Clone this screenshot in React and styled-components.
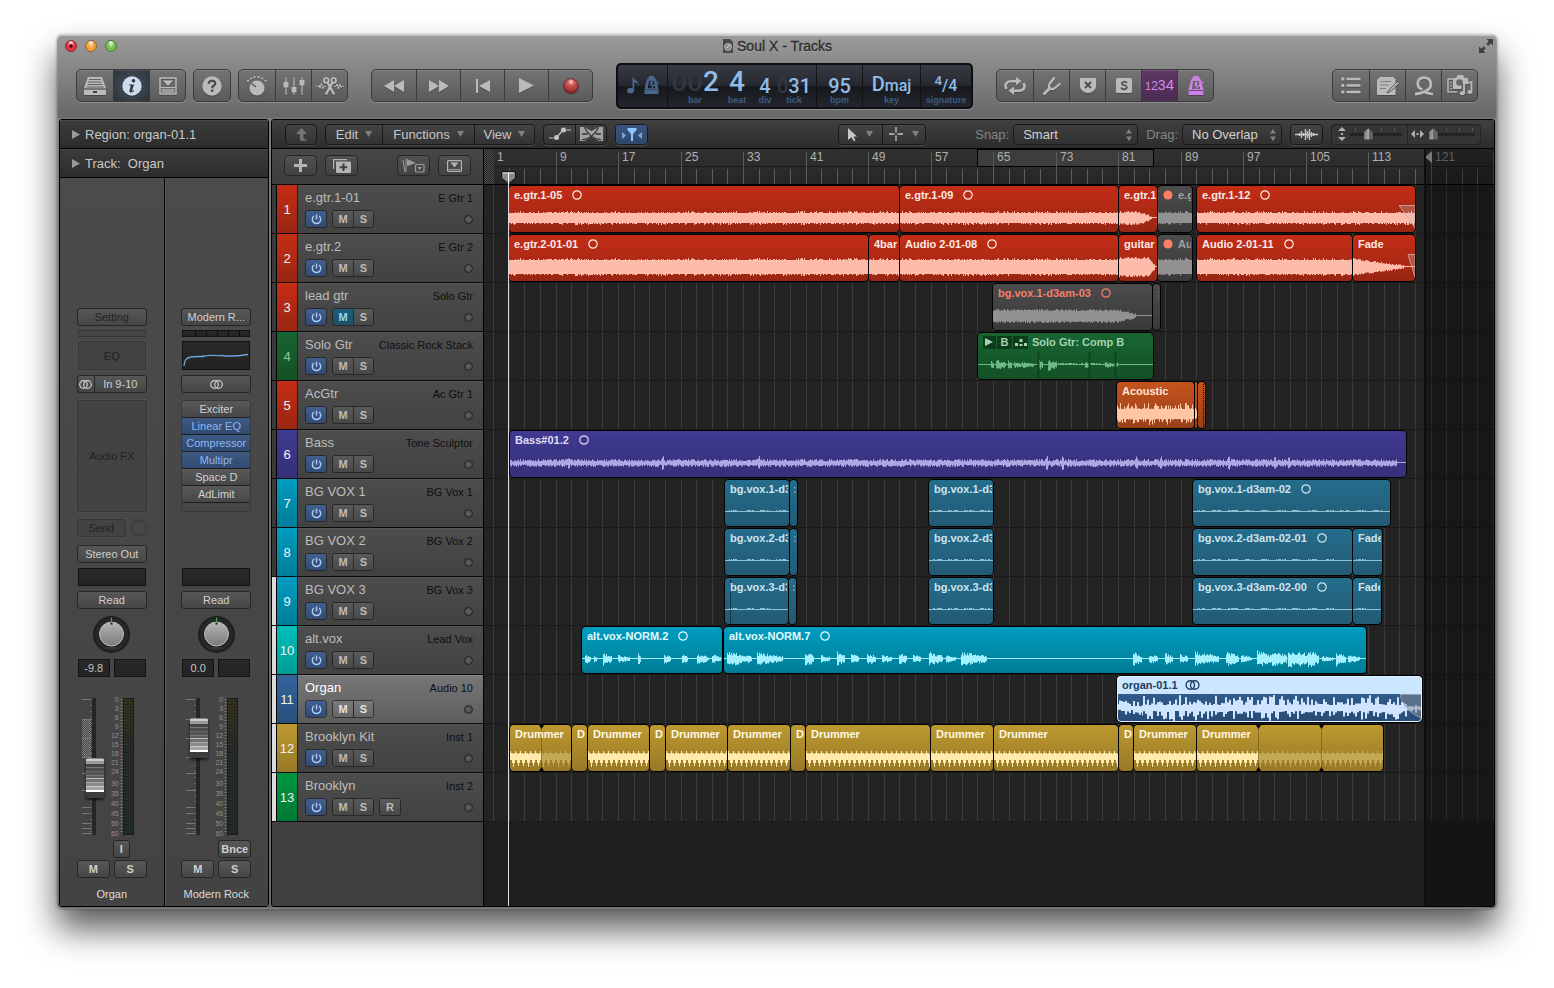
import React, { useState } from "react";
import styled, { createGlobalStyle, css } from "styled-components";

const GlobalStyle = createGlobalStyle`
  * { box-sizing: border-box; }
  body {
    margin: 0;
    background: #fff;
    font-family: "Liberation Sans", Arial, sans-serif;
    font-size: 13px;
    color: #c4c4c4;
  }
  button, input, select { font-family: inherit; margin: 0; }
  button { cursor: pointer; padding: 0; }
  svg { display: block; }
`;

/* ---------- window ---------- */

const Desktop = styled.div`
  min-height: 100vh;
  display: flex;
  flex-direction: column;
  padding: 35px 57px 79px;
  overflow: hidden;
`;

const Window = styled.main`
  flex: 1;
  display: flex;
  flex-direction: column;
  min-width: 1300px;
  padding: 0 2px 2px;
  border-radius: 5px;
  background: linear-gradient(#9b9b9b, #686868 82px, #7c7c7c 84px, #6b6b6b);
  box-shadow: inset 0 1px 0 #c6c6c6, inset 0 0 0 1px rgba(160, 160, 160, 0.4),
    0 0 3px rgba(0, 0, 0, 0.4), 0 20px 34px rgba(0, 0, 0, 0.65);
`;

const TitleBar = styled.header`
  position: relative;
  height: 22px;
  display: flex;
  align-items: center;
  justify-content: center;
  gap: 3px;
  color: #2a2a2a;
  text-shadow: 0 1px 0 rgba(255, 255, 255, 0.3);
`;

const Title = styled.h1`
  margin: 0;
  font-size: 14px;
  line-height: 16px;
  font-weight: 400;
  -webkit-text-stroke: 0.3px #2a2a2a;
`;

const Lights = styled.div`
  position: absolute;
  left: 6px;
  top: 5px;
  display: flex;
  gap: 8px;
`;

const Light = styled.button`
  width: 12px;
  height: 12px;
  border: 1px solid ${(p) => p.$edge};
  border-radius: 50%;
  background: ${(p) => (p.$dot ? "radial-gradient(circle, #5d0710 20%, transparent 30%)," : "")}
    radial-gradient(ellipse at 50% 15%, rgba(255, 255, 255, 0.9), transparent 50%),
    ${(p) => p.$color};
`;

const FullScreen = styled.button`
  position: absolute;
  right: 2px;
  top: 4px;
  border: 0;
  background: none;
`;

const Toolbar = styled.div`
  height: 62px;
  display: flex;
  align-items: center;
  gap: 23px;
  padding: 0 17px 5px;
`;

const ToolSet = styled.div`
  display: flex;
  gap: 7px;
`;

const ToolGroup = styled.div`
  display: flex;
  height: 33px;
  border: 1px solid #3b3b3b;
  border-radius: 5px;
  overflow: hidden;
  background: linear-gradient(#747474, #5a5a5a);
  box-shadow: 0 1px 0 #8c8c8c;
  ${(p) => p.$end && "margin-left: auto;"}
`;

const ToolButton = styled.button`
  width: ${(p) => p.$w || 36}px;
  display: flex;
  align-items: center;
  justify-content: center;
  border: 0;
  color: #bababa;
  background: none;
  box-shadow: inset 0 1px 0 rgba(255, 255, 255, 0.12);
  & + & { border-left: 1px solid #3b3b3b; }
  svg { filter: drop-shadow(0 1px 0 rgba(0, 0, 0, 0.25)); }
  ${(p) =>
    p.$on === "blue" &&
    css`
      color: #ccdcec;
      background: radial-gradient(#465260, #2e3339);
    `}
  ${(p) =>
    p.$on === "purple" &&
    css`
      color: #d58bea;
      background: linear-gradient(#5d3964, #4b2b52);
    `}
`;

const CountIn = styled.span`
  display: flex;
  align-items: baseline;
  line-height: 20px;
  span:nth-child(1) { font-size: 11px; }
  span:nth-child(2) { font-size: 12px; }
  span:nth-child(3) { font-size: 14px; }
  span:nth-child(4) { font-size: 15px; }
`;

const Click = styled.span`
  color: ${(p) => (p.$lcd ? "#47698f" : "#cf80e6")};
`;

/* ---------- lcd ---------- */

const Lcd = styled.section`
  height: 46px;
  width: 357px;
  display: flex;
  border: 2px solid #0c0d10;
  border-radius: 5px;
  color: #8fbce8;
  background: linear-gradient(#383b43, #24272e 50%, #16181d 50%, #23262c);
  box-shadow: 0 1px 0 #8f8f8f;
  font-family: Roboto, "Liberation Sans", sans-serif;
`;

const LcdCell = styled.div`
  flex: 0 0 ${(p) => p.$w}px;
  display: flex;
  justify-content: center;
  align-items: ${(p) => (p.$middle ? "center" : "flex-end")};
  gap: ${(p) => (p.$middle ? 4 : 0)}px;
  padding-bottom: 1px;
  & + & { border-left: 1px solid #111317; }
`;

const Readout = styled.div`
  flex: 0 0 ${(p) => (p.$w ? p.$w + "px" : "auto")};
  display: flex;
  flex-direction: column;
  align-items: center;
`;

const Digits = styled.span`
  font-size: ${(p) => (p.$big ? 28 : 20)}px;
  line-height: ${(p) => (p.$big ? 26 : 18)}px;
  font-weight: 500;
  white-space: nowrap;
  i { font-style: normal; color: #31363f; }
  small { font-size: 16px; }
  sup { line-height: 10px; }
`;

const LcdLabel = styled.span`
  font-family: "Liberation Sans", sans-serif;
  font-size: 9px;
  line-height: 11px;
  font-weight: 700;
  color: #3d5c80;
`;

/* ---------- panels ---------- */

const Body = styled.div`
  flex: 1;
  display: flex;
  gap: 2px;
`;

const Inspector = styled.aside`
  flex: 0 0 210px;
  display: flex;
  flex-direction: column;
  border: 1px solid #000;
  border-radius: 3px;
  background: #444;
`;

const InspectorRow = styled.button`
  height: 29px;
  display: flex;
  align-items: center;
  gap: 5px;
  padding: 0 12px;
  border: 0;
  border-bottom: 1px solid #000;
  color: #c8c8c8;
  background: linear-gradient(#3c3c3c, #2c2c2c);
  box-shadow: inset 0 1px 0 #484848;
  font-size: 13px;
  white-space: pre;
`;

const Strips = styled.div`
  flex: 1;
  display: flex;
`;

const Strip = styled.section`
  flex: 1;
  display: flex;
  flex-direction: column;
  align-items: center;
  padding-top: 130px;
  background: linear-gradient(#4b4b4b, #434343);
  & + & { border-left: 1px solid #000; box-shadow: inset 1px 0 0 #5a5a5a; }
`;

const Slot = styled.button`
  width: ${(p) => p.$w || 70}px;
  height: ${(p) => p.$h || 18}px;
  margin-top: ${(p) => p.$mt || 0}px;
  display: flex;
  align-items: center;
  justify-content: center;
  border: 1px solid #262626;
  border-radius: 3px;
  color: ${(p) => (p.$dim ? "#222" : "#cfcfcf")};
  background: linear-gradient(#575757, #464646);
  font-size: 11px;
  font-weight: ${(p) => (p.$bold ? 700 : 400)};
  white-space: nowrap;
  ${(p) =>
    p.$empty &&
    css`
      background: #434343;
      border-color: #363636;
      box-shadow: 0 0 0 1px rgba(255, 255, 255, 0.03);
      border-radius: 2px;
    `}
`;

const Well = styled.div`
  width: ${(p) => p.$w || 68}px;
  height: ${(p) => p.$h || 18}px;
  margin-top: ${(p) => p.$mt || 0}px;
  display: flex;
  align-items: center;
  justify-content: center;
  border: 1px solid #131313;
  background: ${(p) => (p.$plain ? "#464646" : "linear-gradient(#292929, #232323)")};
  ${(p) => p.$plain && "border-color: #363636;"}
  font-size: 11px;
`;

const StripRow = styled.div`
  width: 70px;
  min-height: ${(p) => p.$h || 18}px;
  margin-top: ${(p) => p.$mt || 0}px;
  display: flex;
  gap: ${(p) => p.$gap || 0}px;
  padding-left: ${(p) => p.$indent || 0}px;
  justify-content: ${(p) => p.$justify || "space-between"};
`;

const SendKnob = styled.span`
  width: 16px;
  height: 16px;
  margin-top: 1px;
  border: 1px solid #363636;
  border-radius: 50%;
`;

const InputPair = styled(StripRow)`
  ${Slot}:first-child { border-radius: 3px 0 0 3px; border-right: 0; }
  ${Slot}:last-child { border-radius: 0 3px 3px 0; }
`;

const FxRack = styled.div`
  width: 70px;
  height: 112px;
  margin-top: 7px;
  display: flex;
  flex-direction: column;
  border: 1px solid #383838;
  border-radius: 3px;
`;

const FxSlot = styled.button`
  height: 17px;
  border: 0;
  border-bottom: 1px solid #1e1e1e;
  border-radius: 2px;
  color: ${(p) => (p.$on ? "#8fb4f2" : "#d0d0d0")};
  background: ${(p) =>
    p.$on ? "linear-gradient(#3f5b84, #304a70)" : "linear-gradient(#595959, #474747)"};
  font-size: 11px;
`;

const Knob = styled.label`
  position: relative;
  margin-top: 7px;
  input { position: absolute; inset: 0; width: 100%; opacity: 0; }
`;

const FaderRow = styled.div`
  width: 70px;
  height: 137px;
  margin-top: 21px;
  display: flex;
  padding-left: 5px;
`;

const FaderBox = styled.div`
  position: relative;
  flex: 0 0 22px;
`;

const Fader = styled.input`
  position: absolute;
  right: 0;
  top: 0;
  width: 18px;
  height: 137px;
  appearance: none;
  writing-mode: vertical-lr;
  direction: rtl;
  background: none;
  &::-webkit-slider-thumb {
    appearance: none;
    width: 18px;
    height: 40px;
    border-radius: 2px;
    box-shadow: 0 2px 3px rgba(0, 0, 0, 0.7);
    background: linear-gradient(
      #888 0 1px, #ccc 1px 3px, #9b9b9b 3px 6px, #444 6px 9px, #777 9px 10px,
      #4c4c4c 10px 13px, #666 13px 14px, #555 14px 17px, #777 17px 18px, #5e5e5e 18px 20px,
      #bbb 20px 21px, #707070 21px 24px, #aaa 24px 25px, #8a8a8a 25px 28px, #c8c8c8 28px 29px,
      #a5a5a5 29px 32px, #fff 32px 34px, #3c3c3c 34px 40px
    );
  }
`;

const MeterScale = styled.ol`
  flex: 0 0 15px;
  margin: -2px 1px 0 0;
  padding: 0;
  list-style: none;
  color: #909090;
  font-size: 7px;
  text-align: right;
`;

const MeterMark = styled.li`
  height: ${(p) => p.$h}px;
  line-height: 8px;
`;

const Meter = styled.div`
  flex: 0 0 11px;
  height: 137px;
  border: 1px solid #1b1b1b;
  background: repeating-linear-gradient(transparent 0 2px, rgba(0, 0, 0, 0.15) 2px 3px),
    linear-gradient(#34301f, #272c28 40%, #232b29);
`;

const StripName = styled.div`
  margin-top: 8px;
  line-height: 16px;
  font-size: 11px;
  color: #dcdcdc;
`;

/* ---------- arrange window ---------- */

const Main = styled.section`
  flex: 1;
  min-width: 0;
  display: flex;
  flex-direction: column;
  border: 1px solid #000;
  border-radius: 3px;
  overflow: hidden;
  background: #3c3c3c;
`;

const MenuBar = styled.div`
  height: 29px;
  display: flex;
  align-items: center;
  gap: 8px;
  padding: 0 13px;
  border-bottom: 1px solid #000;
  background: linear-gradient(#404040, #2c2c2c);
`;

const MenuGroup = styled.div`
  display: flex;
  height: 21px;
  border: 1px solid #191919;
  border-radius: 4px;
  background: linear-gradient(#444, #333);
  box-shadow: 0 1px 0 #484848;
  ${(p) => p.$push && "margin-left: auto;"}
`;

const MenuButton = styled.button`
  min-width: ${(p) => p.$w || 31}px;
  display: flex;
  align-items: center;
  justify-content: center;
  gap: ${(p) => p.$gap || 7}px;
  padding: 0;
  border: 0;
  border-radius: 3px;
  color: #c6c6c6;
  background: ${(p) => (p.$on ? "linear-gradient(#3a557e, #2f466a)" : "none")};
  font-size: 13px;
  & + & { border-left: 1px solid #191919; border-radius: 0; }
`;

const FieldLabel = styled.label`
  color: #858585;
  margin-left: ${(p) => (p.$first ? 41 : 0)}px;
  margin-right: -4px;
`;

const SelectBox = styled.div`
  position: relative;
  width: ${(p) => p.$w}px;
  height: 21px;
  border: 1px solid #191919;
  border-radius: 4px;
  background: linear-gradient(#3f3f3f, #303030);
  svg { position: absolute; right: 5px; top: 4px; pointer-events: none; }
`;

const Select = styled.select`
  width: 100%;
  height: 100%;
  padding: 0 9px;
  appearance: none;
  border: 0;
  background: none;
  color: #d2d2d2;
  font-size: 13px;
`;

const ZoomGroup = styled.div`
  display: flex;
  width: 150px;
  height: 21px;
  border: 1px solid #222;
  border-radius: 4px;
  background: #353535;
`;

const ZoomControl = styled.label`
  flex: 1 1 0;
  min-width: 0;
  display: flex;
  align-items: center;
  gap: 4px;
  padding: 0 5px 0 6px;
  svg { flex: none; }
  & + & { border-left: 1px solid #262626; padding-left: 3px; }
`;

const ZoomSlider = styled.input`
  flex: 1 1 0;
  width: 0;
  min-width: 0;
  height: 12px;
  appearance: none;
  background: linear-gradient(#232323, #232323) center / 100% 3px no-repeat,
    repeating-linear-gradient(90deg, #5a5a5a 0 1px, transparent 1px 13px) 5px 0 / 100% 3px no-repeat;
  &::-webkit-slider-thumb {
    appearance: none;
    width: 9px;
    height: 11px;
    background: linear-gradient(90deg, #777, #aaa 50%, #666 50%);
    clip-path: polygon(50% 0, 100% 35%, 100% 100%, 0 100%, 0 35%);
  }
`;

const Arrange = styled.div`
  flex: 1;
  display: flex;
`;

const TrackColumn = styled.div`
  flex: 0 0 212px;
  border-right: 1px solid #000;
  background: #404040;
`;

const TrackTools = styled.div`
  height: 36px;
  display: flex;
  align-items: center;
  gap: 8px;
  padding: 0 12px 2px;
  border-bottom: 1px solid #000;
  background: linear-gradient(#474747, #3d3d3d);
`;

const TrackTool = styled.button`
  width: 33px;
  height: 21px;
  display: flex;
  align-items: center;
  justify-content: center;
  border: 1px solid #262626;
  border-radius: 4px;
  color: #b5b5b5;
  background: linear-gradient(#505050, #424242);
  ${(p) => p.$push && "margin-left: auto;"}
`;

const TrackRow = styled.div`
  height: 49px;
  display: flex;
  border-bottom: 1px solid #0a0a0a;
  background: ${(p) =>
    p.$selected ? "linear-gradient(#777, #5d5d5d)" : "linear-gradient(#4d4d4d, #424242)"};
  box-shadow: inset 0 1px 0 ${(p) => (p.$selected ? "#8a8a8a" : "#565656")};
`;

const Marker = styled.span`
  flex: 0 0 5px;
  border-right: 1px solid #000;
  background: ${(p) => (p.$on ? "#dcdcdc" : "#3a3a3a")};
`;

const TrackNumber = styled.span`
  flex: 0 0 21px;
  display: flex;
  align-items: center;
  justify-content: center;
  border-right: 1px solid #222;
  color: ${(p) => (p.$faint ? "#8fc79f" : "#f2f2f2")};
  background: linear-gradient(${(p) => p.$from}, ${(p) => p.$to});
`;

const TrackBody = styled.div`
  flex: 1;
  padding: 5px 10px 5px 7px;
  display: flex;
  flex-direction: column;
  gap: 5px;
`;

const TrackLine = styled.div`
  display: flex;
  align-items: center;
  gap: 5px;
`;

const TrackName = styled.span`
  flex: 1;
  line-height: 15px;
  color: ${(p) => (p.$selected ? "#fff" : "#bdbdbd")};
`;

const Patch = styled.span`
  font-size: 11px;
  color: #0f0f0f;
  white-space: nowrap;
`;

const TrackButtons = styled.div`
  display: flex;
  height: 18px;
  border: 1px solid ${(p) => (p.$selected ? "#333" : "#272727")};
  border-radius: 3px;
  overflow: hidden;
`;

const TrackButton = styled.button`
  width: 20px;
  display: flex;
  align-items: center;
  justify-content: center;
  border: 0;
  color: #bcbcbc;
  background: linear-gradient(#5a5a5a, #484848);
  font-size: 11px;
  font-weight: 700;
  & + & { border-left: 1px solid #2b2b2b; }
  ${(p) =>
    p.$selected &&
    css`
      color: #e2e2e2;
      background: linear-gradient(#7b7b7b, #666);
    `}
  ${(p) =>
    p.$on === "power" &&
    css`
      color: #a9cdf5;
      background: linear-gradient(#415f8f, #324b75);
    `}
  ${(p) =>
    p.$on === "mute" &&
    css`
      color: #8ddcf5;
      background: linear-gradient(#1f5f7a, #1b5068);
    `}
`;

const FreezeLamp = styled.span`
  width: 9px;
  height: 9px;
  margin-left: auto;
  border: 1px solid #222;
  border-radius: 50%;
  background: radial-gradient(#666, #3d3d3d);
`;

const Timeline = styled.div`
  position: relative;
  flex: 1;
  min-width: 0;
  overflow: hidden;
  background: #1e1e1e;
`;

const Ruler = styled.div`
  position: relative;
  height: 36px;
  border-bottom: 1px solid #000;
  background: linear-gradient(#313131, #262626);
`;

const RulerLabels = styled.div`
  display: flex;
  padding-left: 9px;
`;

const RulerLabel = styled.span`
  position: relative;
  flex: 0 0 ${(p) => p.$w}px;
  padding-left: 4px;
  line-height: 16px;
  font-size: 12px;
  color: ${(p) => (p.$off ? "#8a8a8a" : "#b0b0b0")};
`;

const Overlay = styled.svg`
  position: absolute;
  left: 0;
  top: 0;
`;

const Lanes = styled.div`
  position: relative;
  background: #232323;
`;

const Lane = styled.div`
  position: relative;
  height: 49px;
  display: flex;
  padding-top: 1px;
  border-bottom: 1px solid #1b1b1b;
`;

const PastEnd = styled.div`
  position: absolute;
  left: 940px;
  right: 0;
  top: 0;
  bottom: 0;
  background: rgba(0, 0, 0, 0.32);
  border-left: 2px solid #0d0d0d;
`;

const Playhead = styled.div`
  position: absolute;
  left: 24px;
  top: 34px;
  bottom: 0;
  width: 1px;
  background: #dcdcdc;
`;

const PlayheadCap = styled.svg`
  position: absolute;
  left: 17px;
  top: 22px;
`;

const RegionFrame = styled.div`
  flex: none;
  height: 46px;
  border-radius: 4px;
  box-shadow: 0 0 0 1px #000;
`;

const Region = styled.article`
  position: relative;
  height: 46px;
  overflow: hidden;
  border-radius: 4px;
  color: ${(p) => p.$skin.text};
  background: linear-gradient(${(p) => p.$skin.from}, ${(p) => p.$skin.to});
  ${(p) =>
    p.$selected &&
    css`
      background: linear-gradient(#cbe6ff 0 18px, #2f5b8a 18px, #284c75);
    `}
`;

const RegionLabel = styled.header`
  position: relative;
  display: flex;
  align-items: center;
  gap: ${(p) => p.$gap}px;
  margin: 2px 1px 0 ${(p) => (p.$tight ? 3 : 5)}px;
  overflow: hidden;
  font-size: 11px;
  line-height: 14px;
  font-weight: 700;
  white-space: nowrap;
  opacity: ${(p) => (p.$tight ? 0.5 : 1)};
  svg { flex: none; }
`;

const TakeButtons = styled.span`
  display: flex;
  gap: 1px;
  margin-left: -2px;
`;

const TakeButton = styled.button`
  width: 15px;
  height: 13px;
  display: flex;
  align-items: center;
  justify-content: center;
  border: 0;
  color: #a5d3b1;
  background: #0d3c1d;
  font-size: 11px;
  font-weight: 700;
`;

const WaveLayer = styled.svg`
  position: absolute;
  left: 0;
  top: 0;
`;

/* ---------- icons ---------- */

function Icon({ w, h, children, ...rest }) {
  return (
    <svg width={w} height={h} viewBox={`0 0 ${w} ${h}`} fill="currentColor" aria-hidden="true" {...rest}>
      {children}
    </svg>
  );
}

const LibraryIcon = () => (
  <Icon w={22} h={18}>
    <path d="M4 0H18L22 11V18H0V11Z" />
    <path d="M5 2.500H17M4.300 5H17.700M3.500 7.500H18.500M2.500 10H19.500" stroke="#606060" fill="none" />
    <path d="M0 12H22" stroke="#606060" strokeWidth="1.500" />
    <rect x="9" y="14" width="4" height="2" fill="#444" />
  </Icon>
);

const InfoIcon = () => (
  <Icon w={20} h={20}>
    <circle cx="10" cy="10" r="9.700" />
    <circle cx="11.500" cy="4.800" r="1.800" fill="#30353c" />
    <path d="M7 8.500H12L10.200 14.400C10 15.200 10.600 15.200 11.800 14.300L12.300 14.800C10.500 16.700 7 17.200 7.400 14.700L8.800 9.600L6.800 9.300Z" fill="#30353c" />
  </Icon>
);

const PanelIcon = () => (
  <Icon w={18} h={18}>
    <rect x="1" y="1" width="16" height="16" fill="none" stroke="currentColor" strokeWidth="1.500" />
    <path d="M4 3.500H14L9 9Z" />
    <rect x="2.500" y="11.500" width="13" height="4.500" opacity=".7" />
    <path d="M1 10.500H17" stroke="currentColor" />
  </Icon>
);

const HelpIcon = () => (
  <Icon w={20} h={20}>
    <circle cx="10" cy="10" r="9.700" />
    <path d="M6.800 7.800C6.800 3.700 13.300 3.800 13.200 7.500C13.100 9.800 10.200 9.700 10.200 12.200" fill="none" stroke="#4b4b4b" strokeWidth="2.200" />
    <rect x="9" y="13.500" width="2.400" height="2.400" fill="#4b4b4b" />
  </Icon>
);

const KnobIcon = () => (
  <Icon w={20} h={20}>
    <circle cx="10" cy="12" r="7.500" />
    <path d="M9 11L4.500 7.500" stroke="#555" strokeWidth="1.500" />
    {[[1, 4.800], [4, 2.500], [7.500, 1.200], [11.500, 1.200], [15.200, 2.500], [18.500, 4.800]].map(([x, y]) => (
      <circle key={x} cx={x} cy={y} r="1.100" />
    ))}
  </Icon>
);

const MixerIcon = () => (
  <Icon w={22} h={18}>
    <path d="M3 0V18M11 0V18M19 0V18" stroke="currentColor" strokeWidth="1.200" />
    <rect x="0.500" y="5" width="5" height="5.500" rx=".5" />
    <rect x="8.500" y="10" width="5" height="5.500" rx=".5" />
    <rect x="16.500" y="3" width="5" height="5.500" rx=".5" />
  </Icon>
);

const ScissorsIcon = () => (
  <Icon w={28} h={18} fill="none" stroke="currentColor" strokeWidth="1">
    <path d="M0 9.500H2L3 8L4 11.500L5.500 6L7 12L8 9.500H10M18 9.500H20L21 7L22.500 12L24 7L25 10.500L26 9.500H28" />
    <path d="M9.800 17.500L16.300 6M18.200 17.500L11.700 6" strokeWidth="2.400" />
    <circle cx="10.300" cy="3.500" r="2.300" strokeWidth="1.800" />
    <circle cx="17.700" cy="3.500" r="2.300" strokeWidth="1.800" />
  </Icon>
);

const CycleIcon = () => (
  <Icon w={22} h={18} fill="none" stroke="currentColor" strokeWidth="2.600">
    <path d="M2.500 12C0 7 3 4.300 7 4.300H12.500M19.500 6C22 11 19 13.700 15 13.700H9.500" />
    <path d="M12 0L17.500 4.300L12 8.600ZM10 9.400L4.500 13.700L10 18Z" fill="currentColor" stroke="none" />
  </Icon>
);

const ForkIcon = () => (
  <Icon w={20} h={20} fill="none" stroke="currentColor" strokeWidth="2.200">
    <path d="M1.500 18.500L7.500 12.500" strokeWidth="2.800" />
    <path d="M12.500 1.500L7.500 8C5.500 11 9 14.500 12 12.500L18.500 7.500" />
  </Icon>
);

const ShieldIcon = () => (
  <Icon w={16} h={15}>
    <path d="M0 1Q0 0 1 0H15Q16 0 16 1V8C16 12 12 15 8 15C4 15 0 12 0 8Z" />
    <path d="M5 4L11 10M11 4L5 10" stroke="#505050" strokeWidth="2" />
  </Icon>
);

const SoloIcon = () => (
  <Icon w={16} h={15}>
    <rect width="16" height="15" rx="1.500" />
    <path d="M10.800 5.200C10 3.200 5.800 3.200 5.900 5.400C6 8 10.800 6.600 10.800 9.300C10.800 12 5.800 11.800 5.200 9.500" fill="none" stroke="#505050" strokeWidth="1.700" />
  </Icon>
);

const MetronomeIcon = ({ w = 16, h = 19 }) => (
  <svg width={w} height={h} viewBox="0 0 16 19" fill="currentColor" aria-hidden="true">
    <path fillRule="evenodd" d="M6 0H10L13 4L15.500 14V19H0.500V14L3 4ZM5.200 5L4 13H12L10.800 5Z" />
    <path d="M8 12.500L15.500 6" stroke="currentColor" strokeWidth="1.300" />
    <rect x="7" y="5.500" width="2.200" height="5" />
    <path d="M1 14.500H15" stroke="#4a3350" strokeWidth=".8" />
  </svg>
);

const ListIcon = () => (
  <Icon w={20} h={17}>
    {[2, 8.500, 15].map((y) => (
      <g key={y}>
        <circle cx="1.800" cy={y} r="1.700" />
        <rect x="5.500" y={y - 1.200} width="14" height="2.500" rx=".6" />
      </g>
    ))}
  </Icon>
);

const NoteIcon = () => (
  <Icon w={22} h={18}>
    <path d="M3 0H16L18.500 2V18H0V3Z" />
    <path d="M3 4.500H14M3 8H12M3 11.500H9" stroke="#808080" />
    <path d="M21 4L12 13L10 16L13.500 14.500L22 6.500Z" stroke="#555" strokeWidth="1" />
  </Icon>
);

const LoopIcon = () => (
  <Icon w={20} h={20} fill="none" stroke="currentColor" strokeWidth="2.800">
    <path d="M8.500 13.500C1 11 3 1.700 10 1.700C18 1.700 18.500 11 13.500 14C10 16 4 18 1 18M11 17.500C13 15.500 16 18.500 19 17.800" />
  </Icon>
);

const MediaIcon = () => (
  <Icon w={26} h={21}>
    <path d="M1 4V17H10M1 4H6" fill="none" stroke="currentColor" strokeWidth="1.500" />
    <path d="M4 7V16" stroke="currentColor" strokeDasharray="1.500 1.500" strokeWidth="1.500" />
    <path d="M6 3H9L10.500 0H16L17.500 3H21V9H14.500V14H6Z" />
    <circle cx="12.500" cy="7.500" r="3.300" fill="#666" />
    <path d="M17 18V8.500L24.500 7V16.500" fill="none" stroke="currentColor" strokeWidth="1.800" />
    <ellipse cx="15.300" cy="18.300" rx="2.600" ry="2" />
    <ellipse cx="22.900" cy="17" rx="2.600" ry="2" />
  </Icon>
);

const RewindIcon = () => (
  <Icon w={20} h={12}><path d="M10 0V12L0 6ZM20 0V12L10 6Z" /></Icon>
);
const ForwardIcon = () => (
  <Icon w={20} h={12}><path d="M0 0L10 6L0 12ZM10 0L20 6L10 12Z" /></Icon>
);
const ToStartIcon = () => (
  <Icon w={14} h={14}><path d="M0 0H2V14H0ZM14 1V13L3 7Z" /></Icon>
);
const PlayIcon = () => (
  <Icon w={15} h={15}><path d="M0 0L15 7.500L0 15Z" /></Icon>
);
const RecordIcon = () => (
  <Icon w={16} h={16}>
    <defs>
      <radialGradient id="rec" cx="50%" cy="22%" r="75%">
        <stop offset="0" stopColor="#ffd9d5" />
        <stop offset=".3" stopColor="#d15c5a" />
        <stop offset="1" stopColor="#8a2227" />
      </radialGradient>
    </defs>
    <circle cx="8" cy="8" r="7.300" fill="url(#rec)" stroke="#682023" strokeWidth=".8" />
  </Icon>
);

const NoteGlyph = () => (
  <Icon w={13} h={18} color="#47698f">
    <path d="M5.500 0C6 4 12.500 4.500 11.500 10C11 7.500 9.500 6.500 7.300 6.300V14C7.300 18.500 0 18.600 0 14.800C0 11.800 3.500 11 5.500 12.200Z" />
  </Icon>
);

const Caret = () => (
  <Icon w={7} h={6} color="#808080"><path d="M0 0H7L3.500 6Z" /></Icon>
);
const Disclosure = () => (
  <Icon w={8} h={9} color="#9a9a9a"><path d="M0 0L8 4.500L0 9Z" /></Icon>
);
const UpArrowIcon = () => (
  <Icon w={11} h={13} color="#757575"><path d="M5.500 0L11 6H7.500V10Q7.500 11.500 10.500 11.500V13H7Q3.800 13 3.800 10V6H0Z" /></Icon>
);
const AutomationIcon = () => (
  <Icon w={22} h={14}>
    <path d="M0 11H4.500M7.500 10.500L14 3M17.500 3H22" fill="none" stroke="currentColor" strokeWidth="1.200" />
    <circle cx="7.500" cy="10.500" r="2.500" />
    <circle cx="14.500" cy="3" r="2.500" />
  </Icon>
);
const FlexIcon = () => (
  <Icon w={23} h={14}>
    <path d="M0 0H4L11.500 4L19 0H23V14H19L11.500 10L4 14H0Z" opacity=".75" />
    <path d="M4.500 .5C8 8 15 13 21 12.500M18.500 .5C15 8 8 13 2 12.500" fill="none" stroke="#333" strokeWidth="1.200" />
    <path d="M2 7H7.500M15.500 7H21" fill="none" stroke="#333" strokeWidth="1.500" />
  </Icon>
);
const CatchIcon = () => (
  <Icon w={20} h={13} color="#8dc5ff">
    <path d="M5.500 0H14.500V2L11 6V13H9V6L5.500 2Z" />
    <path d="M0 4L4 7.500L0 11ZM20 4L16 7.500L20 11Z" opacity=".75" />
  </Icon>
);
const PointerIcon = () => (
  <Icon w={9} h={13}><path d="M0 0L9 8.500H5.500L7.500 12.500L5.500 13L3.600 9.300L0 12Z" /></Icon>
);
const CrossIcon = () => (
  <Icon w={14} h={14}><path d="M7 0V5.500M7 8.500V14M0 7H5.500M8.500 7H14" stroke="currentColor" strokeWidth="1.300" /></Icon>
);
const SteppersIcon = () => (
  <Icon w={6} h={12} color="#838383"><path d="M0 4.500L3 0L6 4.500ZM0 7.500L3 12L6 7.500Z" /></Icon>
);
const WaveIcon = () => (
  <Icon w={23} h={13} stroke="currentColor" strokeWidth="1.400">
    <path d="M0 6.500H23M4.500 5V8M6.500 3V10M8.500 5V8M10.500 1V12M12.500 3V10M14.500 1V12M16.500 4V9M18.500 5V8" />
  </Icon>
);
const VerticalIcon = () => (
  <Icon w={8} h={14} color="#b0b0b0"><path d="M0 4L4 0L8 4ZM0 10L4 14L8 10ZM3 6H5V8H3Z" /></Icon>
);
const HorizontalIcon = () => (
  <Icon w={13} h={8} color="#b0b0b0"><path d="M4 0V8L0 4ZM9 0V8L13 4ZM5.500 3H7.500V5H5.500Z" /></Icon>
);
const PlusIcon = () => (
  <Icon w={13} h={13}><path d="M5 0H8V5H13V8H8V13H5V8H0V5H5Z" /></Icon>
);
const DuplicateIcon = () => (
  <Icon w={18} h={14}>
    <path d="M.6 10V.6H14" fill="none" stroke="currentColor" strokeWidth="1.200" />
    <rect x="3" y="2.500" width="15" height="11.500" rx="1" />
    <path d="M10.500 4.500V12M6.700 8.200H14.300" stroke="#3f3f3f" strokeWidth="2" />
  </Icon>
);
const FlagIcon = () => (
  <Icon w={23} h={14} color="#9c9c9c">
    <path d="M1 1L3 13M4 0V13" stroke="currentColor" fill="none" />
    <path d="M5 0L14 4L5 7Z" />
    <rect x="13.500" y="5.500" width="8.500" height="7.500" rx="1" fill="none" stroke="currentColor" strokeWidth="1.200" />
    <path d="M15.500 8H20L17.800 11Z" />
  </Icon>
);
const GlobalIcon = () => (
  <Icon w={15} h={12}>
    <rect x=".6" y=".6" width="13.800" height="10.800" rx="1" fill="none" stroke="currentColor" strokeWidth="1.200" />
    <path d="M3.500 2.500H11.500L7.500 7.500Z" />
    <path d="M2 9.500H13" stroke="currentColor" strokeWidth=".8" />
  </Icon>
);
const PowerIcon = () => (
  <Icon w={11} h={11} fill="none" stroke="currentColor" strokeWidth="1.400">
    <path d="M5.500 .5V5.500M3 2A4.200 4.200 0 1 0 8 2" />
  </Icon>
);
const StereoIcon = ({ w = 13, h = 9 }) => (
  <svg width={w} height={h} viewBox="0 0 13 9" fill="none" stroke="currentColor" strokeWidth="1.200" aria-hidden="true">
    <circle cx="4.500" cy="4.500" r="3.800" />
    <circle cx="8.500" cy="4.500" r="3.800" />
  </svg>
);
const RingIcon = () => (
  <Icon w={10} h={10} fill="none" stroke="currentColor" strokeWidth="1.200"><circle cx="5" cy="5" r="4.200" /></Icon>
);
const DotIcon = () => (
  <Icon w={10} h={10} color="#fb7f66"><circle cx="5" cy="5" r="4.600" /></Icon>
);
const DocIcon = () => (
  <Icon w={12} h={14}>
    <path d="M1 0H8L11 3V14H1Z" fill="#4a4a4a" />
    <circle cx="6" cy="8" r="3.500" fill="#8a8a8a" stroke="#b5b5b5" />
    <path d="M5 9L8.500 5" stroke="#ddd" />
  </Icon>
);
const ExpandIcon = () => (
  <Icon w={14} h={14} color="#404040">
    <path d="M7.500 0H14V6.500L11.700 4.300L9.300 6.700L7.300 4.700L9.700 2.300ZM6.500 14H0V7.500L2.300 9.700L4.700 7.300L6.700 9.300L4.300 11.700Z" />
  </Icon>
);

/* ---------- song data ---------- */

const skins = {
  red: { from: "#c52d16", to: "#982613", wave: "#ffbbaa", text: "#fbe9e5" },
  gray: { from: "#4c4c4c", to: "#393939", wave: "#919191", text: "#a0a0a0" },
  green: { from: "#186532", to: "#145127", wave: "#6cb983", text: "#a5d3b1" },
  orange: { from: "#c5531d", to: "#98401a", wave: "#ffc6a5", text: "#fbe6db" },
  purple: { from: "#403a91", to: "#353078", wave: "#aca8e4", text: "#dedcf6" },
  teal: { from: "#246d8c", to: "#225a74", wave: "#8cc0d4", text: "#cfe3ec" },
  cyan: { from: "#009cc0", to: "#007d96", wave: "#a3f0ff", text: "#e0fbff" },
  organ: { from: "#cbe6ff", to: "#284c75", wave: "#cfe5ff", text: "#1d3c60" },
  gold: { from: "#bd9930", to: "#977827", wave: "#ffe9ab", text: "#fff8e2", loopWave: "#c4a955" },
};

const flat = (amp, rough = 0) => ({ kind: "flat", amp, rough });
const decay = (amp, from, to) => ({ kind: "decay", amp, from, to });
const bursts = (list) => ({ kind: "bursts", list });

// bursts are [start, length, amplitude]
const leadA = [[3, 6, 5], [12, 3, 4], [21, 9, 6], [36, 12, 4], [56, 3, 6], [82, 7, 5], [100, 6, 5], [115, 12, 5], [130, 9, 5]];
const leadB = [
  [3, 25, 7], [33, 26, 6], [81, 9, 8], [97, 9, 4], [113, 8, 7], [127, 8, 5], [143, 9, 6], [158, 10, 4],
  [175, 8, 6], [189, 8, 5], [205, 14, 7], [222, 10, 4], [237, 26, 7], [409, 9, 7], [425, 9, 5], [441, 8, 6],
  [456, 8, 5], [471, 24, 7], [502, 13, 7], [517, 11, 4], [533, 15, 8], [548, 15, 8], [564, 10, 9], [574, 10, 9],
  [584, 11, 9], [598, 12, 3], [612, 10, 7], [624, 12, 4],
];
const quiet = (w) => {
  const list = [];
  for (let x = 3; x < w - 12; x += 16) list.push([x, 10, 1]);
  return list;
};

const bgv = (label, s, e) => ({ s, e, label, wave: bursts(quiet(e - s)) });
const sliver = (s, e) => ({ s, e, label: ":", tight: true });
const drum = (s, e, loops) => ({ s, e, label: "Drummer", wave: { kind: "drums" }, loops });
const fill = (s, e) => ({ s, e, label: "D" });

// s and e are pixel offsets on the timeline at the current zoom
const tracks = [
  {
    name: "e.gtr.1-01", patch: "E Gtr 1", skin: "red",
    regions: [
      { s: 25, e: 415, label: "e.gtr.1-05", ring: true, wave: flat(5) },
      { s: 416, e: 634, label: "e.gtr.1-09", ring: true, wave: flat(5) },
      { s: 635, e: 673, label: "e.gtr.1", wave: decay(5, 20, 34) },
      { s: 674, e: 708, label: "e.g", dot: true, skin: "gray", wave: flat(5) },
      { s: 713, e: 931, label: "e.gtr.1-12", ring: true, wave: flat(5), fade: 16 },
    ],
  },
  {
    name: "e.gtr.2", patch: "E Gtr 2", skin: "red",
    regions: [
      { s: 25, e: 384, label: "e.gtr.2-01-01", ring: true, wave: flat(7) },
      { s: 385, e: 415, label: "4bar", wave: flat(7) },
      { s: 416, e: 634, label: "Audio 2-01-08", ring: true, wave: flat(7) },
      { s: 635, e: 673, label: "guitar", wave: decay(8, 30, 36) },
      { s: 674, e: 708, label: "Au", dot: true, skin: "gray", wave: flat(7) },
      { s: 713, e: 868, label: "Audio 2-01-11", ring: true, wave: flat(7) },
      { s: 869, e: 931, label: "Fade", wave: decay(7, 0, 54), fade: 7 },
    ],
  },
  {
    name: "lead gtr", patch: "Solo Gtr", skin: "red", muted: true,
    regions: [
      { s: 509, e: 668, label: "bg.vox.1-d3am-03", ring: true, skin: "gray", tint: "#f3806a", wave: decay(5, 125, 145) },
      { ...sliver(669, 676), skin: "gray", tint: "#e0614a" },
    ],
  },
  {
    name: "Solo Gtr", patch: "Classic Rock Stack", skin: "green", faint: true,
    regions: [
      {
        s: 494, e: 669, label: "Solo Gtr: Comp B", take: true,
        wave: bursts([[13, 3, 5], [18, 10, 5], [30, 4, 5], [36, 8, 3], [44, 12, 3], [61, 4, 5], [70, 9, 6], [80, 25, 1], [107, 4, 4], [112, 10, 1], [127, 10, 3], [137, 3, 4]]),
      },
    ],
  },
  {
    name: "AcGtr", patch: "Ac Gtr 1", skin: "red",
    regions: [
      { s: 633, e: 710, label: "Acoustic", skin: "orange", wave: flat(5, 4) },
      { s: 711, e: 713, label: "", skin: "orange", wave: flat(4) },
      { s: 714, e: 721, label: "", skin: "orange", dashed: true },
    ],
  },
  {
    name: "Bass", patch: "Tone Sculptor", skin: "purple",
    regions: [{ s: 26, e: 922, label: "Bass#01.2", ring: true, wave: { kind: "bass" } }],
  },
  {
    name: "BG VOX 1", patch: "BG Vox 1", skin: "teal", strip: "cyan",
    regions: [bgv("bg.vox.1-d3", 241, 305), sliver(306, 313), bgv("bg.vox.1-d3", 445, 509), { ...bgv("bg.vox.1-d3am-02", 709, 906), ring: true }],
  },
  {
    name: "BG VOX 2", patch: "BG Vox 2", skin: "teal", strip: "cyan",
    regions: [bgv("bg.vox.2-d3", 241, 305), sliver(306, 313), bgv("bg.vox.2-d3", 445, 509), { ...bgv("bg.vox.2-d3am-02-01", 709, 868), ring: true }, bgv("Fade", 869, 898)],
  },
  {
    name: "BG VOX 3", patch: "BG Vox 3", skin: "teal", strip: "cyan", marked: true,
    regions: [{ ...bgv("bg.vox.3-d3", 241, 304), dashed: true }, sliver(305, 312), bgv("bg.vox.3-d3", 445, 509), { ...bgv("bg.vox.3-d3am-02-00", 709, 868), ring: true }, bgv("Fade", 869, 897)],
  },
  {
    name: "alt.vox", patch: "Lead Vox", skin: "cyan", colors: ["#00bdb8", "#009d98"], marked: true,
    regions: [
      { s: 98, e: 238, label: "alt.vox-NORM.2", ring: true, wave: bursts(leadA) },
      { s: 240, e: 882, label: "alt.vox-NORM.7", ring: true, wave: bursts(leadB) },
    ],
  },
  {
    name: "Organ", patch: "Audio 10", skin: "organ", colors: ["#33659b", "#294f7c"], marked: true, selected: true,
    regions: [{ s: 633, e: 938, label: "organ-01.1", stereo: true, selected: true, wave: { kind: "organ" } }],
  },
  {
    name: "Brooklyn Kit", patch: "Inst 1", skin: "gold", marked: true,
    regions: [
      drum(26, 87, [31]), fill(88, 103), drum(104, 165), fill(166, 181), drum(182, 243), drum(244, 306),
      fill(307, 321), drum(322, 446), drum(447, 509), drum(510, 634), fill(635, 649), drum(650, 712),
      drum(713, 899, [61, 124]),
    ],
  },
  { name: "Brooklyn", patch: "Inst 2", colors: ["#009640", "#007a34"], marked: true, record: true, regions: [] },
];

/* ---------- waveform ---------- */

function noise(n) {
  const v = Math.sin(n * 127.1 + 311.7) * 43758.5453;
  return v - Math.floor(v);
}

function levels(wave, x, seed, width) {
  const a = noise(x + seed);
  const b = noise(x * 3 + seed + 91);
  switch (wave.kind) {
    case "flat": {
      const spike = a > 0.93 ? 2 : a > 0.6 ? 1 : 0;
      const low = b > 0.93 ? 2 : b > 0.6 ? 1 : 0;
      return [wave.amp + spike + wave.rough * a * a, wave.amp + low + wave.rough * b * b];
    }
    case "decay": {
      const t = Math.min(1, Math.max(0, (x - wave.from) / (wave.to - wave.from)));
      const amp = wave.amp * (1 - t);
      return amp > 0.5 ? [amp + a * 2, amp + b * 2] : [1, 0];
    }
    case "bursts": {
      const hit = wave.list.find(([s, w]) => x >= s && x < s + w);
      if (!hit) return [1, 0];
      if (hit[2] === 1) return [a > 0.3 ? 2 : 1, a > 0.75 ? 0 : 1 - Math.ceil(b)];
      const tail = 1 - (0.55 * (x - hit[0])) / hit[1];
      return [Math.max(1, hit[2] * tail * (0.5 + a * 0.6)), hit[2] * tail * (0.5 + b * 0.6)];
    }
    case "bass": {
      const spike = noise(Math.floor(x / 2) + 7) > 0.98 ? 3 : 0;
      if (x > width - 10) return [1, 0];
      return [1.5 + a * 2.5 + spike, 1.5 + b * 2.5 + spike];
    }
    case "organ": {
      const env = x > width - 16 ? 0.4 : x < 25 ? 0.6 : 1;
      const u = noise(Math.floor(x / 2) + 5);
      const d = noise(Math.floor(x / 2) + 55);
      return [(3 + u * u * 10) * env, (3 + d * d * 10) * env];
    }
    case "drums": {
      const p = x % 5;
      const strong = Math.floor(x / 5) % 3 === 0;
      return [[6, 4, 4, 3, 4][p], [3, 3, 6, 9, 6][p] + (p === 3 && strong ? 1 : 0)];
    }
    default:
      return [0, 0];
  }
}

function Waveform({ wave, width, color, seed, loops, loopColor }) {
  const mid = 32;
  let top = `M0 ${mid}`;
  let bottom = "";
  for (let x = 0; x < width; x++) {
    const [up, down] = levels(wave, x, seed, width);
    top += `V${(mid - up).toFixed(1)}H${x + 1}`;
    bottom = `H${x + 1}V${(mid + down).toFixed(1)}` + bottom;
  }
  const d = `${top}${bottom}H0Z`;
  if (!loops) {
    return (
      <WaveLayer width={width} height="46" aria-hidden="true">
        <path d={d} fill={color} />
      </WaveLayer>
    );
  }
  const clip = `pass-${seed}`;
  return (
    <WaveLayer width={width} height="46" aria-hidden="true">
      <clipPath id={clip}><rect width={loops[0]} height="46" /></clipPath>
      <path d={d} fill={loopColor} />
      <path d={d} fill={color} clipPath={`url(#${clip})`} />
      {loops.map((x) => (
        <g key={x}>
          <path d={`M${x + 0.5} 3V43`} stroke="#000" strokeOpacity=".25" />
          <path d={`M${x - 2} 0H${x + 3}L${x + 0.5} 4ZM${x - 2} 46H${x + 3}L${x + 0.5} 42Z`} fill="#000" />
        </g>
      ))}
    </WaveLayer>
  );
}

function FadeShape({ width, size, curved }) {
  const x = width - size;
  const d = curved ? `M${x} 18.500H${width}V42C${x + 10} 38 ${x + 3} 30 ${x} 18.500Z` : `M${x} 19.500H${width}V42Z`;
  return (
    <WaveLayer width={width} height="46" aria-hidden="true">
      <path d={d} fill={curved ? "rgba(130,140,150,.5)" : "rgba(200,190,190,.3)"} stroke={curved ? "#a8adb2" : "#d3aaa4"} strokeOpacity=".8" />
    </WaveLayer>
  );
}

function TimelineRegion({ region, trackSkin, gap }) {
  const skin = skins[region.skin || trackSkin];
  const width = region.e - region.s;
  return (
    <RegionFrame style={{ width, marginLeft: gap }}>
      <Region $skin={region.tint ? { ...skin, text: region.tint } : skin} $selected={region.selected}>
        {region.wave && (
          <Waveform wave={region.wave} width={width} color={skin.wave} seed={region.s} loops={region.loops} loopColor={skin.loopWave} />
        )}
        {region.fade && <FadeShape width={width} size={region.fade} />}
        {region.selected && <FadeShape width={width} size={22} curved />}
        {region.selected && (
          <WaveLayer width={width} height="46" aria-hidden="true">
            <rect x=".5" y=".5" width={width - 1} height="45" rx="3.500" fill="none" stroke="#e3f1ff" />
          </WaveLayer>
        )}
        {region.take && (
          <WaveLayer width={width} height="46" aria-hidden="true">
            <path d="M60.500 19V45M111.500 19V45M137.500 19V45" stroke="#0f4320" strokeWidth="2" />
          </WaveLayer>
        )}
        {region.dashed && (
          <WaveLayer width={width} height="46" aria-hidden="true">
            <path d="M5.500 2V45" stroke="#0a0a0a" strokeDasharray="1 1" />
          </WaveLayer>
        )}
        {region.label && (
          <RegionLabel $gap={region.take ? 4 : region.dot ? 5 : region.stereo ? 7 : 10} $tight={region.tight}>
            {region.dot && <DotIcon />}
            {region.take && (
              <TakeButtons>
                <TakeButton aria-label="Play take"><Icon w={8} h={8}><path d="M0 0L8 4L0 8Z" /></Icon></TakeButton>
                <TakeButton>B</TakeButton>
                <TakeButton aria-label="Quick swipe">
                  <Icon w={12} h={7}><path d="M0 4H3V7H0ZM4.500 0H7.500V3H4.500ZM4.500 5H7.500V7H4.500ZM9 4H12V7H9Z" /></Icon>
                </TakeButton>
              </TakeButtons>
            )}
            <span>{region.label}</span>
            {region.ring && <RingIcon />}
            {region.stereo && <StereoIcon w={15} h={10} />}
          </RegionLabel>
        )}
      </Region>
    </RegionFrame>
  );
}

/* ---------- timeline ---------- */

const tickOffsets = [0, 16, 31, 47, 63, 78, 94, 109];
const barLabels = Array.from({ length: 16 }, (_, i) => 1 + i * 8);
const labelX = (i) => Math.round(i * 62.5);

function GridLines() {
  return (
    <Overlay width="100%" height="100%" aria-hidden="true">
      <defs>
        <pattern id="grid" x="9" width="125" height="10" patternUnits="userSpaceOnUse">
          {tickOffsets.map((x) => <rect key={x} x={x} width="1" height="10" fill="#3b3b3b" />)}
        </pattern>
      </defs>
      <rect width="100%" height="100%" fill="url(#grid)" />
    </Overlay>
  );
}

function RulerMarks() {
  return (
    <Overlay width="100%" height="35" aria-hidden="true">
      <defs>
        <pattern id="ticks" x="9" width="125" height="35" patternUnits="userSpaceOnUse">
          {tickOffsets.map((x) => {
            const y = x === 0 || x === 63 ? 3 : 20;
            return <rect key={x} x={x} y={y} width="1" height={35 - y} fill="#5c5c5c" />;
          })}
        </pattern>
        <pattern id="stipple" width="2" height="2" patternUnits="userSpaceOnUse">
          <rect width="1" height="1" fill="#4c4c4c" />
          <rect x="1" y="1" width="1" height="1" fill="#4c4c4c" />
        </pattern>
      </defs>
      <rect y="17" width="100%" height="1" fill="#1b1b1b" />
      <rect x="493.500" y=".5" width="176" height="17" fill="#3d3d3d" stroke="#000" />
      <rect width="100%" height="35" fill="url(#ticks)" />
      <rect width="10" height="35" fill="#242424" />
      <rect width="10" height="35" fill="url(#stipple)" />
      <path d="M948 2V14L941 8Z" fill="#b0b0b0" />
    </Overlay>
  );
}

function TimelineView() {
  return (
    <Timeline>
      <Ruler>
        <RulerMarks />
        <RulerLabels>
          {barLabels.map((bar, i) => (
            <RulerLabel key={bar} $w={labelX(i + 1) - labelX(i)} $off={bar > 120}>{bar}</RulerLabel>
          ))}
        </RulerLabels>
      </Ruler>
      <Lanes>
        <GridLines />
        {tracks.map((track) => {
          let cursor = 0;
          return (
            <Lane key={track.name}>
              {track.regions.map((region) => {
                const gap = region.s - cursor;
                cursor = region.e;
                return <TimelineRegion key={region.s} region={region} trackSkin={track.skin} gap={gap} />;
              })}
            </Lane>
          );
        })}
      </Lanes>
      <PastEnd />
      <Playhead />
      <PlayheadCap width="15" height="13" viewBox="0 0 15 13" aria-hidden="true">
        <path d="M.5 2Q.5 .5 2 .5H13Q14.500 .5 14.500 2V7L7.500 12.700L.5 7Z" fill="#8a8a8a" stroke="#111" />
        <path d="M2 2H13" stroke="#ddd" />
        <path d="M7.500 2V13" stroke="#fff" />
      </PlayheadCap>
    </Timeline>
  );
}

/* ---------- track headers ---------- */

function TrackHeader({ track, number }) {
  const [muted, setMuted] = useState(Boolean(track.muted));
  const skin = skins[track.strip || track.skin];
  const [from, to] = track.colors || [skin.from, skin.to];
  const { selected } = track;
  return (
    <TrackRow $selected={selected}>
      <Marker $on={track.marked} />
      <TrackNumber $from={from} $to={to} $faint={track.faint}>{number}</TrackNumber>
      <TrackBody>
        <TrackLine>
          <TrackName $selected={selected}>{track.name}</TrackName>
          <Patch>{track.patch}</Patch>
        </TrackLine>
        <TrackLine>
          <TrackButtons $selected={selected}>
            <TrackButton $on="power" aria-label="Track on"><PowerIcon /></TrackButton>
          </TrackButtons>
          <TrackButtons $selected={selected}>
            <TrackButton $selected={selected} $on={muted && "mute"} onClick={() => setMuted(!muted)}>M</TrackButton>
            <TrackButton $selected={selected}>S</TrackButton>
          </TrackButtons>
          {track.record && (
            <TrackButtons>
              <TrackButton>R</TrackButton>
            </TrackButtons>
          )}
          <FreezeLamp />
        </TrackLine>
      </TrackBody>
    </TrackRow>
  );
}

/* ---------- channel strips ---------- */

const meterMarks = [
  [0, 9], [3, 9], [6, 9], [9, 9], [12, 9], [15, 9], [18, 9], [21, 9], [24, 12],
  [30, 10], [35, 10], [40, 10], [45, 10], [50, 10], [60, 10],
];
const faderTicks = [1, 21, 40, 59, 75, 92, 109, 115, 125, 130, 135];

function FaderScale({ shaded }) {
  return (
    <svg width="22" height="137" aria-hidden="true">
      {faderTicks.map((y) => <rect key={y} x="0" y={y} width="10" height="1" fill="#777" />)}
      {Array.from({ length: 23 }, (_, i) => <rect key={i} x="8" y={i * 6 + 1} width="2" height="1" fill="#666" />)}
      {shaded && (
        <>
          <defs>
            <pattern id="shade" width="2" height="2" patternUnits="userSpaceOnUse">
              <rect width="1" height="1" fill="#808080" />
              <rect x="1" y="1" width="1" height="1" fill="#808080" />
            </pattern>
          </defs>
          <rect x="0" y="22" width="9" height="37" fill="url(#shade)" />
        </>
      )}
      <rect x="10" y="0" width="4" height="137" fill="#262626" />
    </svg>
  );
}

function PanKnob({ name }) {
  return (
    <Knob aria-label={`${name} pan`}>
      <Icon w={37} h={37}>
        <defs>
          <linearGradient id="cap" x2="0" y2="1">
            <stop offset="0" stopColor="#b5b5b5" />
            <stop offset="1" stopColor="#7a7a7a" />
          </linearGradient>
        </defs>
        <circle cx="18.500" cy="18.500" r="18.500" fill="#1f1f1f" />
        <circle cx="18.500" cy="18.500" r="15" fill="none" stroke="#282828" strokeWidth="3" />
        <path d="M10 33L14 31H23L27 33Z" fill="#353535" />
        <rect x="18" y="1.500" width="1" height="4" fill="#2fbf5b" />
        <circle cx="18.500" cy="18" r="12" fill="url(#cap)" stroke="#bdbdbd" />
        <rect x="17.500" y="6.500" width="2" height="2" fill="#222" />
      </Icon>
      <input type="range" min="-64" max="63" defaultValue="0" />
    </Knob>
  );
}

const effects = [
  ["Exciter", false], ["Linear EQ", true], ["Compressor", true],
  ["Multipr", true], ["Space D", false], ["AdLimit", false],
];

function ChannelStrip({ name, gain, level, output }) {
  return (
    <Strip aria-label={name}>
      {output ? <Slot>Modern R...</Slot> : <Slot $dim>Setting</Slot>}
      <Well $mt={4} $h={7} $plain={!output}>
        {output && (
          <svg width="66" height="5" aria-hidden="true">
            <path d="M12.500 0V5M23.500 0V5M34.500 0V5M45.500 0V5M56.500 0V5" stroke="#0c0c0c" />
          </svg>
        )}
      </Well>
      {output ? (
        <Well $mt={4} $h={29}>
          <Icon w={66} h={27} fill="none" stroke="#6aa3dc" strokeWidth="1.300">
            <path d="M1 24C1.500 18 3 16 8 15C14 14 18 15 22 14C27 12.500 32 14 38 13.500C46 14.500 52 14.500 65 12.500" />
          </Icon>
        </Well>
      ) : (
        <Slot $mt={4} $w={68} $h={29} $empty $dim>EQ</Slot>
      )}
      {output ? (
        <Slot $mt={5} aria-label="Stereo format"><StereoIcon /></Slot>
      ) : (
        <InputPair $mt={5}>
          <Slot $w={17} aria-label="Stereo format"><StereoIcon /></Slot>
          <Slot $w={53}>In 9-10</Slot>
        </InputPair>
      )}
      {output ? (
        <FxRack>
          {effects.map(([label, on]) => <FxSlot key={label} $on={on}>{label}</FxSlot>)}
        </FxRack>
      ) : (
        <Slot $mt={7} $h={112} $empty $dim>Audio FX</Slot>
      )}
      <StripRow $mt={7}>
        {!output && (
          <>
            <Slot $w={49} $empty $dim>Send</Slot>
            <SendKnob />
          </>
        )}
      </StripRow>
      <StripRow $mt={8}>{!output && <Slot>Stereo Out</Slot>}</StripRow>
      <Well $mt={5} />
      <Slot $mt={5}>Read</Slot>
      <PanKnob name={name} />
      <StripRow $mt={6} $gap={4} $justify="center">
        <Well $w={32}>{gain}</Well>
        <Well $w={32} />
      </StripRow>
      <FaderRow>
        <FaderBox>
          <FaderScale shaded={!output} />
          <Fader type="range" min="0" max="100" defaultValue={level} aria-label={`${name} volume`} />
        </FaderBox>
        <MeterScale>
          {meterMarks.map(([db, h]) => <MeterMark key={db} $h={h}>{db}</MeterMark>)}
        </MeterScale>
        <svg width="3" height="137" aria-hidden="true">
          <path d="M1.500 1V136" stroke="#7a7a7a" strokeWidth="2" strokeDasharray="1 2" />
        </svg>
        <Meter />
      </FaderRow>
      <StripRow $mt={5} $indent={output ? 0 : 36} $justify={output ? "flex-end" : "flex-start"}>
        <Slot $w={output ? 33 : 17} $bold>{output ? "Bnce" : "I"}</Slot>
      </StripRow>
      <StripRow $mt={2}>
        <Slot $w={33} $bold>M</Slot>
        <Slot $w={33} $bold>S</Slot>
      </StripRow>
      <StripName>{name}</StripName>
    </Strip>
  );
}

/* ---------- toolbars ---------- */

function TransportLcd() {
  return (
    <Lcd aria-label="Transport display">
      <LcdCell $w={49} $middle>
        <NoteGlyph />
        <Click $lcd><MetronomeIcon w={15} h={18} /></Click>
      </LcdCell>
      <LcdCell $w={149}>
        <Readout $w={48}><Digits $big><i>00</i>2</Digits><LcdLabel>bar</LcdLabel></Readout>
        <Readout $w={36}><Digits $big>4</Digits><LcdLabel>beat</LcdLabel></Readout>
        <Readout $w={20}><Digits>4</Digits><LcdLabel>div</LcdLabel></Readout>
        <Readout $w={38}><Digits><i>0</i>31</Digits><LcdLabel>tick</LcdLabel></Readout>
      </LcdCell>
      <LcdCell $w={46}>
        <Readout><Digits>95</Digits><LcdLabel>bpm</LcdLabel></Readout>
      </LcdCell>
      <LcdCell $w={58}>
        <Readout><Digits>D<small>maj</small></Digits><LcdLabel>key</LcdLabel></Readout>
      </LcdCell>
      <LcdCell $w={51}>
        <Readout><Digits><small><sup>4</sup>/4</small></Digits><LcdLabel>signature</LcdLabel></Readout>
      </LcdCell>
    </Lcd>
  );
}

function MainToolbar() {
  return (
    <Toolbar>
      <ToolSet>
        <ToolGroup>
          <ToolButton aria-label="Library"><LibraryIcon /></ToolButton>
          <ToolButton aria-label="Inspector" $on="blue"><InfoIcon /></ToolButton>
          <ToolButton aria-label="Toolbar"><PanelIcon /></ToolButton>
        </ToolGroup>
        <ToolGroup>
          <ToolButton aria-label="Quick help"><HelpIcon /></ToolButton>
        </ToolGroup>
        <ToolGroup>
          <ToolButton aria-label="Smart controls"><KnobIcon /></ToolButton>
          <ToolButton aria-label="Mixer"><MixerIcon /></ToolButton>
          <ToolButton aria-label="Editors"><ScissorsIcon /></ToolButton>
        </ToolGroup>
      </ToolSet>
      <ToolGroup>
        <ToolButton $w={44} aria-label="Rewind"><RewindIcon /></ToolButton>
        <ToolButton $w={44} aria-label="Forward"><ForwardIcon /></ToolButton>
        <ToolButton $w={44} aria-label="Go to beginning"><ToStartIcon /></ToolButton>
        <ToolButton $w={44} aria-label="Play"><PlayIcon /></ToolButton>
        <ToolButton $w={44} aria-label="Record"><RecordIcon /></ToolButton>
      </ToolGroup>
      <TransportLcd />
      <ToolGroup>
        <ToolButton aria-label="Cycle"><CycleIcon /></ToolButton>
        <ToolButton aria-label="Tuner"><ForkIcon /></ToolButton>
        <ToolButton aria-label="Replace"><ShieldIcon /></ToolButton>
        <ToolButton aria-label="Solo"><SoloIcon /></ToolButton>
        <ToolButton $on="purple" aria-label="Count in">
          <CountIn><span>1</span><span>2</span><span>3</span><span>4</span></CountIn>
        </ToolButton>
        <ToolButton aria-label="Metronome">
          <Click><MetronomeIcon /></Click>
        </ToolButton>
      </ToolGroup>
      <ToolGroup $end>
        <ToolButton aria-label="Lists"><ListIcon /></ToolButton>
        <ToolButton aria-label="Notes"><NoteIcon /></ToolButton>
        <ToolButton aria-label="Loops"><LoopIcon /></ToolButton>
        <ToolButton aria-label="Media"><MediaIcon /></ToolButton>
      </ToolGroup>
    </Toolbar>
  );
}

function TracksMenu() {
  return (
    <MenuBar>
      <MenuGroup><MenuButton $w={30} aria-label="Leave folder"><UpArrowIcon /></MenuButton></MenuGroup>
      <MenuGroup>
        <MenuButton $w={56}>Edit <Caret /></MenuButton>
        <MenuButton $w={92}>Functions <Caret /></MenuButton>
        <MenuButton $w={60}>View <Caret /></MenuButton>
      </MenuGroup>
      <MenuGroup>
        <MenuButton aria-label="Automation"><AutomationIcon /></MenuButton>
        <MenuButton aria-label="Flex"><FlexIcon /></MenuButton>
      </MenuGroup>
      <MenuGroup><MenuButton $on aria-label="Catch playhead"><CatchIcon /></MenuButton></MenuGroup>
      <MenuGroup $push>
        <MenuButton $w={43} $gap={9} aria-label="Left tool"><PointerIcon /><Caret /></MenuButton>
        <MenuButton $w={43} $gap={9} aria-label="Command tool"><CrossIcon /><Caret /></MenuButton>
      </MenuGroup>
      <FieldLabel $first htmlFor="snap">Snap:</FieldLabel>
      <SelectBox $w={125}>
        <Select id="snap" defaultValue="Smart">
          <option>Smart</option>
        </Select>
        <SteppersIcon />
      </SelectBox>
      <FieldLabel htmlFor="drag">Drag:</FieldLabel>
      <SelectBox $w={100}>
        <Select id="drag" defaultValue="No Overlap">
          <option>No Overlap</option>
        </Select>
        <SteppersIcon />
      </SelectBox>
      <MenuGroup><MenuButton aria-label="Waveform zoom"><WaveIcon /></MenuButton></MenuGroup>
      <ZoomGroup>
        <ZoomControl aria-label="Vertical zoom">
          <VerticalIcon />
          <ZoomSlider type="range" min="0" max="100" defaultValue="32" />
        </ZoomControl>
        <ZoomControl aria-label="Horizontal zoom">
          <HorizontalIcon />
          <ZoomSlider type="range" min="0" max="100" defaultValue="2" />
        </ZoomControl>
      </ZoomGroup>
    </MenuBar>
  );
}

export default function App() {
  return (
    <Desktop>
      <GlobalStyle />
      <Window>
        <TitleBar>
          <Lights>
            <Light $color="#e8323c" $edge="#8a2a2e" $dot aria-label="Close" />
            <Light $color="#f0a13a" $edge="#8f6230" aria-label="Minimize" />
            <Light $color="#76bf4b" $edge="#4a7a35" aria-label="Zoom" />
          </Lights>
          <DocIcon />
          <Title>Soul X - Tracks</Title>
          <FullScreen aria-label="Full screen"><ExpandIcon /></FullScreen>
        </TitleBar>
        <MainToolbar />
        <Body>
          <Inspector>
            <InspectorRow><Disclosure />Region: organ-01.1</InspectorRow>
            <InspectorRow><Disclosure />{"Track:  Organ"}</InspectorRow>
            <Strips>
              <ChannelStrip name="Organ" gain="-9.8" level={38} />
              <ChannelStrip name="Modern Rock" gain="0.0" level={79} output />
            </Strips>
          </Inspector>
          <Main>
            <TracksMenu />
            <Arrange>
              <TrackColumn>
                <TrackTools>
                  <TrackTool aria-label="New track"><PlusIcon /></TrackTool>
                  <TrackTool aria-label="Duplicate track"><DuplicateIcon /></TrackTool>
                  <TrackTool $push aria-label="Flags"><FlagIcon /></TrackTool>
                  <TrackTool aria-label="Global tracks"><GlobalIcon /></TrackTool>
                </TrackTools>
                {tracks.map((track, i) => <TrackHeader key={track.name} track={track} number={i + 1} />)}
              </TrackColumn>
              <TimelineView />
            </Arrange>
          </Main>
        </Body>
      </Window>
    </Desktop>
  );
}
